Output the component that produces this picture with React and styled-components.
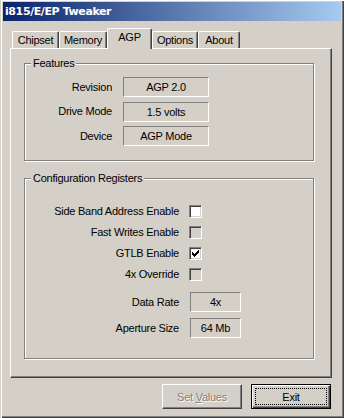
import React from "react";
import styled, { createGlobalStyle } from "styled-components";

const GlobalStyle = createGlobalStyle`
  html, body {
    margin: 0;
    padding: 0;
    background: #d4d0c8;
  }
  body {
    font-family: "Liberation Sans", Arial, sans-serif;
    font-size: 11px;
    color: #000;
  }
`;

const Window = styled.div`
  width: 344px;
  height: 418px;
  box-sizing: border-box;
  padding: 2px 3px 3px 3px;
  background: #d4d0c8;
  box-shadow: inset 1px 0 #d4d0c8, inset 2px 0 #fff, inset 0 1px #fff,
    inset -1px -1px #404040, inset -2px -2px #808080;
  display: flex;
  flex-direction: column;
`;

const TitleBar = styled.div`
  height: 19px;
  flex: none;
  display: flex;
  align-items: center;
  padding-left: 2px;
  background: linear-gradient(to right, #0a246a, #a6caf0);
  color: #fff;
  font-family: "DejaVu Sans", Verdana, sans-serif;
  font-weight: bold;
  font-size: 11px;
  letter-spacing: -0.4px;
`;

const Body = styled.div`
  flex: 1;
  display: flex;
  flex-direction: column;
  padding: 7px 9px 0 7px;
  letter-spacing: -0.25px;
`;

const TabStrip = styled.div`
  display: flex;
  align-items: flex-start;
  height: 20px;
  padding-left: 2px;
  position: relative;
  z-index: 1;
`;

const Tab = styled.div`
  box-sizing: border-box;
  width: ${(p) => p.$w}px;
  height: ${(p) => (p.$active ? 21 : 17)}px;
  margin-top: ${(p) => (p.$active ? 0 : 3)}px;
  padding-top: 2px;
  line-height: 13px;
  text-align: center;
  background: #d4d0c8;
  border-top: 1px solid #fff;
  border-left: 1px solid #fff;
  border-right: 1px solid #404040;
  border-radius: 2px 2px 0 0;
  box-shadow: inset -1px 0 #808080;
`;

const Panel = styled.div`
  box-sizing: border-box;
  width: 322px;
  height: 330px;
  border-top: 1px solid #fff;
  border-left: 1px solid #fff;
  border-right: 1px solid #404040;
  border-bottom: 1px solid #404040;
  box-shadow: inset -1px -1px #808080;
  padding-left: 13px;
  display: flex;
  flex-direction: column;
`;

const GroupBox = styled.div`
  position: relative;
  box-sizing: border-box;
  width: 290px;
  height: ${(p) => p.$h}px;
  margin-top: ${(p) => p.$mt}px;
  border: 1px solid #808080;
  box-shadow: inset 1px 1px #fff, 1px 1px #fff;
  padding-top: ${(p) => p.$pt}px;
`;

const Caption = styled.span`
  position: absolute;
  top: -7px;
  left: 6px;
  padding: 0 2px;
  line-height: 13px;
  background: #d4d0c8;
`;

const FieldGrid = styled.div`
  display: grid;
  grid-template-columns: ${(p) => p.$label}px ${(p) => p.$box}px;
  column-gap: ${(p) => p.$gap}px;
  grid-auto-rows: 20px;
  row-gap: ${(p) => p.$rowGap}px;
  align-items: center;
  margin-top: ${(p) => p.$mt || 0}px;
`;

const CheckGrid = styled.div`
  display: grid;
  grid-template-columns: 154px 13px;
  column-gap: 10px;
  grid-auto-rows: 13px;
  row-gap: 8px;
  align-items: center;
`;

const Label = styled.span`
  text-align: right;
  line-height: 13px;
  white-space: nowrap;
`;

const ValueBox = styled.div`
  box-sizing: border-box;
  height: 20px;
  line-height: 18px;
  text-align: center;
  border-top: 1px solid #808080;
  border-left: 1px solid #808080;
  border-right: 1px solid #fff;
  border-bottom: 1px solid #fff;
`;

const CheckBox = styled.span`
  box-sizing: border-box;
  width: 13px;
  height: 13px;
  display: flex;
  align-items: center;
  justify-content: center;
  background: ${(p) => (p.$disabled ? "#d4d0c8" : "#fff")};
  border-top: 1px solid #808080;
  border-left: 1px solid #808080;
  border-right: 1px solid #fff;
  border-bottom: 1px solid #fff;
  box-shadow: inset 1px 1px #404040, inset -1px -1px #d4d0c8;
`;

const ButtonRow = styled.div`
  display: flex;
  justify-content: flex-end;
  gap: 9px;
  margin-top: 6px;
  padding-right: 1px;
`;

const Button = styled.div`
  position: relative;
  box-sizing: border-box;
  width: 80px;
  height: 25px;
  display: flex;
  align-items: center;
  justify-content: center;
  color: ${(p) => (p.$disabled ? "#808080" : "#000")};
  text-shadow: ${(p) => (p.$disabled ? "1px 1px 0 #fff" : "none")};
  border: 1px solid;
  border-color: ${(p) =>
    p.$default ? "#000" : "#fff #404040 #404040 #fff"};
  box-shadow: ${(p) =>
    p.$default
      ? "inset 1px 1px #fff, inset -1px -1px #404040, inset -2px -2px #808080"
      : "inset -1px -1px #808080"};

  ${(p) =>
    p.$default &&
    `
    &::after {
      content: "";
      position: absolute;
      inset: 3px;
      border: 1px dotted #000;
    }
  `}
`;

const CheckMark = () => (
  <svg width="7" height="7" viewBox="0 0 7 7" shapeRendering="crispEdges">
    <path
      fill="#000"
      d="M6 0h1v1h-1z M5 1h2v1h-2z M0 2h1v1h-1z M4 2h3v1h-3z M0 3h2v1h-2z M3 3h3v1h-3z M0 4h5v1h-5z M1 5h3v1h-3z M2 6h1v1h-1z"
    />
  </svg>
);

const tabs = [
  { name: "Chipset", w: 47 },
  { name: "Memory", w: 48 },
  { name: "AGP", w: 45, active: true },
  { name: "Options", w: 46 },
  { name: "About", w: 42 },
];

const features = [
  ["Revision", "AGP 2.0"],
  ["Drive Mode", "1.5 volts"],
  ["Device", "AGP Mode"],
];

const registers = [
  { label: "Side Band Address Enable" },
  { label: "Fast Writes Enable", disabled: true },
  { label: "GTLB Enable", checked: true },
  { label: "4x Override", disabled: true },
];

const values = [
  ["Data Rate", "4x"],
  ["Aperture Size", "64 Mb"],
];

export default function App() {
  return (
    <>
      <GlobalStyle />
      <Window>
        <TitleBar>i815/E/EP Tweaker</TitleBar>
        <Body>
          <TabStrip>
            {tabs.map((t) => (
              <Tab key={t.name} $w={t.w} $active={t.active}>
                {t.name}
              </Tab>
            ))}
          </TabStrip>
          <Panel>
            <GroupBox $mt={14} $h={98} $pt={13}>
              <Caption>Features</Caption>
              <FieldGrid $label={87} $box={86} $gap={11} $rowGap={4.5}>
                {features.map(([label, value]) => (
                  <React.Fragment key={label}>
                    <Label>{label}</Label>
                    <ValueBox>{value}</ValueBox>
                  </React.Fragment>
                ))}
              </FieldGrid>
            </GroupBox>
            <GroupBox $mt={17} $h={181} $pt={26}>
              <Caption>Configuration Registers</Caption>
              <CheckGrid>
                {registers.map((r) => (
                  <React.Fragment key={r.label}>
                    <Label>{r.label}</Label>
                    <CheckBox $disabled={r.disabled}>
                      {r.checked && <CheckMark />}
                    </CheckBox>
                  </React.Fragment>
                ))}
              </CheckGrid>
              <FieldGrid $label={154} $box={51} $gap={11} $rowGap={6} $mt={11}>
                {values.map(([label, value]) => (
                  <React.Fragment key={label}>
                    <Label>{label}</Label>
                    <ValueBox>{value}</ValueBox>
                  </React.Fragment>
                ))}
              </FieldGrid>
            </GroupBox>
          </Panel>
          <ButtonRow>
            <Button $disabled>
              <span>
                Set <u>V</u>alues
              </span>
            </Button>
            <Button $default>Exit</Button>
          </ButtonRow>
        </Body>
      </Window>
    </>
  );
}
